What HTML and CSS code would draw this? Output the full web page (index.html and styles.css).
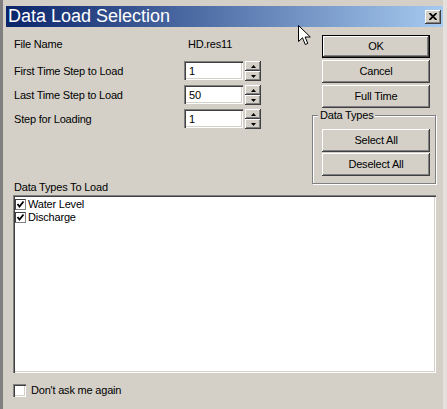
FILE: index.html
```html
<!DOCTYPE html>
<html>
<head>
<meta charset="utf-8">
<link rel="stylesheet" href="styles.css">
</head>
<body>
<div class="screen">
  <div class="edge-left"></div>
  <div class="window">
    <div class="titlebar">
      <span class="title">Data Load Selection</span>
      <span class="close"><svg width="8" height="7" viewBox="0 0 8 7"><path d="M0.5 0 L7.5 7 M7.5 0 L0.5 7" stroke="#000" stroke-width="1.8"/></svg></span>
    </div>
    <div class="client">
      <div class="top">
        <div class="fields">
          <div class="file-row"><span class="label">File Name</span><span class="value">HD.res11</span></div>
          <div class="spin-row first">
            <span class="label">First Time Step to Load</span>
            <span class="field">1</span>
            <span class="spin">
              <span class="spin-btn"><svg width="5" height="3" viewBox="0 0 5 3"><path d="M2.5 0 L5 3 L0 3 Z" fill="#000"/></svg></span>
              <span class="spin-btn"><svg width="5" height="3" viewBox="0 0 5 3"><path d="M0 0 L5 0 L2.5 3 Z" fill="#000"/></svg></span>
            </span>
          </div>
          <div class="spin-row">
            <span class="label">Last Time Step to Load</span>
            <span class="field">50</span>
            <span class="spin">
              <span class="spin-btn"><svg width="5" height="3" viewBox="0 0 5 3"><path d="M2.5 0 L5 3 L0 3 Z" fill="#000"/></svg></span>
              <span class="spin-btn"><svg width="5" height="3" viewBox="0 0 5 3"><path d="M0 0 L5 0 L2.5 3 Z" fill="#000"/></svg></span>
            </span>
          </div>
          <div class="spin-row">
            <span class="label">Step for Loading</span>
            <span class="field">1</span>
            <span class="spin">
              <span class="spin-btn"><svg width="5" height="3" viewBox="0 0 5 3"><path d="M2.5 0 L5 3 L0 3 Z" fill="#000"/></svg></span>
              <span class="spin-btn"><svg width="5" height="3" viewBox="0 0 5 3"><path d="M0 0 L5 0 L2.5 3 Z" fill="#000"/></svg></span>
            </span>
          </div>
        </div>
        <div class="actions">
          <div class="btn default">OK</div>
          <div class="btn">Cancel</div>
          <div class="btn last">Full Time</div>
          <fieldset class="group">
            <legend>Data Types</legend>
            <div class="btn first">Select All</div>
            <div class="btn">Deselect All</div>
          </fieldset>
        </div>
        <div class="list-label">Data Types To Load</div>
      </div>
      <div class="listbox">
        <div class="item"><span class="chk"><svg width="9" height="9" viewBox="0 0 9 9"><path d="M1.5 4 L3.5 6.5 L7.5 1.5" fill="none" stroke="#000" stroke-width="1.8"/></svg></span><span>Water Level</span></div>
        <div class="item"><span class="chk"><svg width="9" height="9" viewBox="0 0 9 9"><path d="M1.5 4 L3.5 6.5 L7.5 1.5" fill="none" stroke="#000" stroke-width="1.8"/></svg></span><span>Discharge</span></div>
      </div>
      <div class="dont-ask"><span class="chk-big"></span><span>Don't ask me again</span></div>
    </div>
  </div>
  <div class="edge-right"></div>
  <svg class="cursor" width="14" height="21" viewBox="0 0 14 21"><path d="M0.5 0.5 L0.5 16.5 L4.5 12.8 L7.3 19.5 L9.8 18.4 L7.1 12 L12.3 12 Z" fill="#fff" stroke="#000" stroke-width="1" stroke-linejoin="miter"/></svg>
</div>
</body>
</html>
```
FILE: styles.css
```css
* { box-sizing: border-box; }
html, body { margin: 0; padding: 0; }
body {
  width: 447px;
  height: 409px;
  overflow: hidden;
  background: #d4d0c8;
  font-family: "Liberation Sans", Arial, sans-serif;
  font-size: 11px;
  line-height: 13px;
  color: #000;
  letter-spacing: -0.2px;
}
.screen {
  position: relative;
  display: flex;
  width: 447px;
  height: 409px;
  background: #d4d0c8;
}
.edge-left { flex: none; width: 3px; background: #808080; }
.edge-right { flex: none; width: 4px; background: #e4e1dc; }
.window {
  flex: 1;
  display: flex;
  flex-direction: column;
  padding: 6px 0 0 3px;
}
.titlebar {
  height: 21px;
  display: flex;
  align-items: center;
  padding: 0 2px;
  background: linear-gradient(to right, #0a246a, #a6caf0);
}
.title {
  flex: 1;
  font-size: 18px;
  line-height: 21px;
  color: #fff;
  letter-spacing: 0;
}
.close {
  width: 16px;
  height: 14px;
  display: flex;
  align-items: center;
  justify-content: center;
  background: #d4d0c8;
  box-shadow: inset -1px -1px #404040, inset 1px 1px #fff, inset -2px -2px #808080;
}
.client { padding: 8px 7px 0 7px; }
.top {
  display: grid;
  grid-template-columns: 1fr 124px;
}
.fields { grid-column: 1; grid-row: 1; padding: 3px 0 0 1px; }
.file-row { display: flex; height: 13px; }
.label { width: 170px; flex: none; }
.value { padding-left: 4px; }
.spin-row {
  display: flex;
  align-items: center;
  height: 20px;
  margin-top: 4px;
}
.spin-row.first { margin-top: 10px; }
.field {
  width: 59px;
  height: 19px;
  align-self: flex-start;
  padding: 4px 0 0 5px;
  background: #fff;
  box-shadow: inset 1px 1px #808080, inset 2px 2px #404040, inset -1px -1px #fff, inset -2px -2px #d4d0c8;
}
.spin {
  margin-left: 2px;
  width: 16px;
  display: flex;
  flex-direction: column;
}
.spin-btn {
  height: 10px;
  display: flex;
  align-items: center;
  justify-content: center;
  box-shadow: inset -1px -1px #404040, inset 1px 1px #fff, inset -2px -2px #808080;
}
.actions {
  grid-column: 2;
  grid-row: 1 / span 2;
  display: flex;
  flex-direction: column;
  margin-bottom: 10px;
}
.btn {
  width: 108px;
  height: 23px;
  margin: 0 0 2px 10px;
  display: flex;
  align-items: center;
  justify-content: center;
  box-shadow: inset -1px -1px #404040, inset 1px 1px #fff, inset -2px -2px #808080;
}
.btn.default {
  box-shadow: inset 0 0 0 1px #000, inset -2px -2px #404040, inset 2px 2px #fff, inset -3px -3px #808080;
}
.btn.last { margin-bottom: 0; }
.group {
  margin: 1px 0 0 0;
  padding: 0 5px 6px 5px;
  min-width: 0;
  border: 1px solid #808080;
  box-shadow: inset 1px 1px #fff, 1px 1px #fff;
}
.group legend { padding: 0 2px; background: #d4d0c8; }
.group .btn { margin: 0 0 1px 4px; }
.group .btn.first { margin-top: 7px; }
.list-label {
  grid-column: 1;
  grid-row: 2;
  align-self: end;
  padding-left: 1px;
}
.listbox {
  margin-top: 1px;
  height: 178px;
  padding: 3px 2px 2px 2px;
  background: #fff;
  box-shadow: inset 1px 1px #808080, inset 2px 2px #404040, inset -1px -1px #fff, inset -2px -2px #d4d0c8;
}
.item { display: flex; align-items: center; height: 13px; }
.chk {
  width: 11px;
  height: 11px;
  margin-right: 2px;
  display: flex;
  align-items: center;
  justify-content: center;
  background: #fff;
  border: 1px solid #404040;
  border-right-color: #808080;
  border-bottom-color: #808080;
}
.dont-ask {
  display: flex;
  align-items: center;
  height: 13px;
  margin-top: 11px;
}
.chk-big {
  width: 13px;
  height: 13px;
  margin-right: 5px;
  background: #fff;
  box-shadow: inset 1px 1px #808080, inset 2px 2px #404040, inset -1px -1px #fff, inset -2px -2px #d4d0c8;
}
.cursor { position: absolute; left: 298px; top: 25px; }
```
